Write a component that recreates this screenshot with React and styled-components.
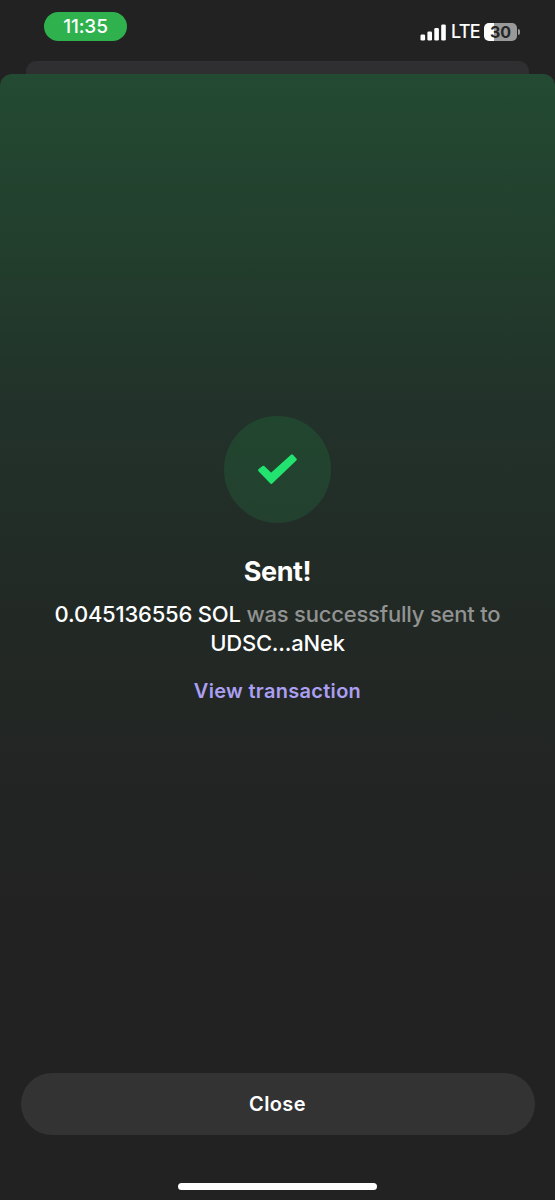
import React from "react";
import styled, { createGlobalStyle } from "styled-components";

const GlobalStyle = createGlobalStyle`
  *, *::before, *::after { box-sizing: border-box; }
  body { margin: 0; background: #222222; }
`;

const Screen = styled.main`
  width: 555px;
  height: 1200px;
  overflow: hidden;
  display: flex;
  flex-direction: column;
  background: #222222;
  color: #ffffff;
  font-family: Inter, "Liberation Sans", sans-serif;
`;

const StatusBar = styled.header`
  height: 61px;
  flex: none;
  display: flex;
  justify-content: space-between;
  align-items: flex-start;
  padding: 12px 35px 0 44px;
`;

const TimePill = styled.time`
  width: 83px;
  height: 29px;
  border-radius: 15px;
  background: #2fb24e;
  font-size: 19px;
  font-weight: 500;
  line-height: 30px;
  letter-spacing: -0.1px;
  text-align: center;
`;

const Indicators = styled.div`
  display: flex;
  align-items: center;
  height: 20px;
  margin-top: 10px;
`;

const Network = styled.span`
  width: 33px;
  margin-right: 0;
  font-size: 18px;
  font-weight: 500;
  line-height: 20px;
  letter-spacing: -0.7px;
`;

const Signal = styled.svg`
  width: 26px;
  height: 17px;
  margin-right: 5px;
  fill: #ffffff;
`;

const Battery = styled.div`
  width: 33px;
  height: 18px;
  border-radius: 5px;
  background: linear-gradient(90deg, #ffffff 30%, #99999a 30%);
  color: #252525;
  font-size: 16px;
  font-weight: 700;
  line-height: 18px;
  text-align: center;
`;

const BatteryTip = styled.span`
  width: 2px;
  height: 6px;
  margin-left: 1px;
  border-radius: 0 2px 2px 0;
  background: #99999a;
`;

const BackCard = styled.div`
  height: 13px;
  flex: none;
  margin: 0 26px;
  border-radius: 10px 10px 0 0;
  background: #2f2f31;
`;

const Sheet = styled.section`
  flex: 1;
  display: flex;
  flex-direction: column;
  align-items: center;
  border-radius: 12px 12px 0 0;
  background: linear-gradient(180deg, #234a33 0, #22402d 145px, #22322a 330px, #222925 540px, #222423 720px, #222222 840px);
`;

const Result = styled.div`
  flex: 1;
  display: flex;
  flex-direction: column;
  align-items: center;
  padding-top: 342px;
  text-align: center;
`;

const StatusCircle = styled.div`
  width: 107px;
  height: 107px;
  border-radius: 50%;
  background: linear-gradient(180deg, #21462f, #23402f);
  display: grid;
  place-items: center;

  svg { width: 107px; height: 107px; }
`;

const Title = styled.h1`
  margin: 31px 0 0;
  font-size: 27px;
  font-weight: 700;
  line-height: 36px;
  letter-spacing: -0.4px;
`;

const Message = styled.p`
  margin: 10px 0 0;
  color: #919392;
  font-size: 22px;
  font-weight: 500;
  line-height: 29px;
  letter-spacing: -0.2px;
`;

const Strong = styled.span`
  color: #ffffff;
  letter-spacing: ${(p) => p.$spacing || "inherit"};
`;

const TransactionLink = styled.a`
  margin-top: 19px;
  color: #ab9ff2;
  font-size: 20px;
  font-weight: 600;
  line-height: 28px;
  letter-spacing: 0.3px;
`;

const CloseButton = styled.button`
  width: 514px;
  height: 62px;
  border: 0;
  border-radius: 31px;
  background: #333333;
  color: #ffffff;
  font: 600 20px/62px Inter, sans-serif;
  letter-spacing: 0.4px;
  padding: 0;
`;

const HomeIndicator = styled.div`
  width: 199px;
  height: 7px;
  margin: 48px 0 10px;
  border-radius: 4px;
  background: #ffffff;
`;

export default function App() {
  return (
    <Screen>
      <GlobalStyle />
      <StatusBar>
        <TimePill>11:35</TimePill>
        <Indicators>
          <Signal viewBox="0 0 26 17">
            <rect x="0.5" y="10.5" width="4.6" height="6" rx="1.3" />
            <rect x="7.4" y="7.5" width="4.6" height="9" rx="1.3" />
            <rect x="14.3" y="4" width="4.6" height="12.5" rx="1.3" />
            <rect x="21.2" y="0.5" width="4.6" height="16" rx="1.3" />
          </Signal>
          <Network>LTE</Network>
          <Battery>30</Battery>
          <BatteryTip />
        </Indicators>
      </StatusBar>
      <BackCard />
      <Sheet>
        <Result>
          <StatusCircle>
            <svg viewBox="0 0 107 107" fill="#22e36f" stroke="#22e36f" strokeWidth="3" strokeLinejoin="round">
              <path d="M35.6 54.2 L39.5 51.2 L47.2 58.7 L68 39.9 L71.3 43.5 L47.2 66.3 Z" />
            </svg>
          </StatusCircle>
          <Title>Sent!</Title>
          <Message>
            <Strong>0.045136556 SOL</Strong> was successfully sent to
            <br />
            <Strong>UDSC...aNek</Strong>
          </Message>
          <TransactionLink>View transaction</TransactionLink>
        </Result>
        <CloseButton>Close</CloseButton>
        <HomeIndicator />
      </Sheet>
    </Screen>
  );
}
